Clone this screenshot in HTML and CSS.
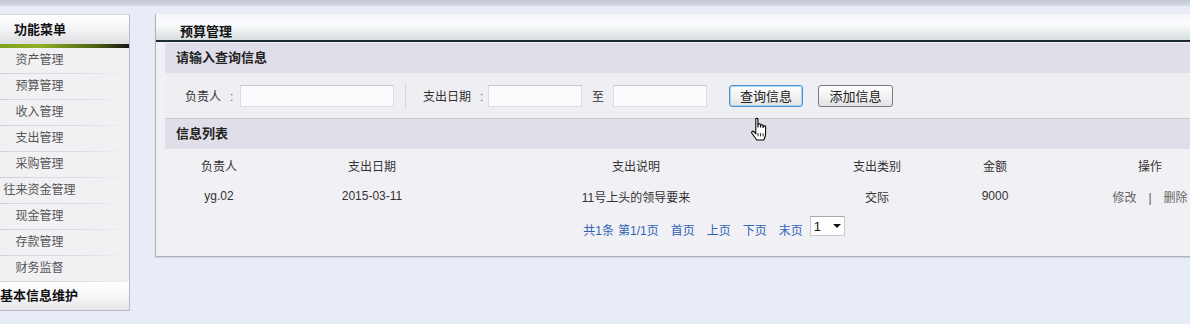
FILE: index.html
```html
<!DOCTYPE html>
<html lang="zh-CN">
<head>
    <meta charset="UTF-8">
    <title>预算管理</title>
    <link rel="stylesheet" href="styles.css">
</head>
<body>

<div class="topbar"></div>

<div class="layout">
    <aside class="sidebar">
        <div class="side-title">功能菜单</div>
        <div class="side-line"></div>
        <ul class="menu">
            <li><a href="#">资产管理</a></li>
            <li><a href="#">预算管理</a></li>
            <li><a href="#">收入管理</a></li>
            <li><a href="#">支出管理</a></li>
            <li><a href="#">采购管理</a></li>
            <li><a href="#">往来资金管理</a></li>
            <li><a href="#">现金管理</a></li>
            <li><a href="#">存款管理</a></li>
            <li><a href="#">财务监督</a></li>
        </ul>
        <div class="side-group">基本信息维护</div>
    </aside>

    <main class="panel">
        <div class="panel-title">预算管理</div>
        <div class="panel-body">
            <div class="band">请输入查询信息</div>
            <form class="search">
                <label class="lbl lbl-name">负责人<span class="colon">:</span></label>
                <input class="field field-name" type="text">
                <span class="divider"></span>
                <label class="lbl lbl-date">支出日期<span class="colon">:</span></label>
                <input class="field field-date" type="text">
                <span class="to">至</span>
                <input class="field field-date" type="text">
                <button type="button" class="btn btn-focus">查询信息</button>
                <button type="button" class="btn btn-add">添加信息</button>
            </form>

            <div class="band">信息列表</div>
            <table class="list">
                <colgroup>
                    <col style="width: 108px">
                    <col style="width: 198px">
                    <col style="width: 330px">
                    <col style="width: 152px">
                    <col style="width: 84px">
                    <col style="width: 226px">
                </colgroup>
                <thead>
                    <tr>
                        <th>负责人</th>
                        <th>支出日期</th>
                        <th>支出说明</th>
                        <th>支出类别</th>
                        <th>金额</th>
                        <th>操作</th>
                    </tr>
                </thead>
                <tbody>
                    <tr>
                        <td>yg.02</td>
                        <td>2015-03-11</td>
                        <td>11号上头的领导要来</td>
                        <td>交际</td>
                        <td>9000</td>
                        <td class="ops"><a href="#">修改</a><span class="sep">|</span><a href="#">删除</a></td>
                    </tr>
                </tbody>
            </table>
            <div class="pager">
                <span>共1条</span> <span>第1/1页</span>
                <a href="#">首页</a>
                <a href="#">上页</a>
                <a href="#">下页</a>
                <a href="#">末页</a>
                <span class="page-select">1 <i class="caret"></i></span>
            </div>
        </div>
    </main>
</div>

<svg class="cursor" width="19" height="25" viewBox="0 0 18 23">
    <path d="M5.5 1.8 C5.5 0.6 7.5 0.6 7.5 1.8 L7.5 9.5 L7.7 7 C7.7 5.8 9.9 5.8 9.9 7 L9.9 9.5 L10.2 7.8 C10.2 6.7 12.3 6.7 12.3 7.8 L12.3 10 L12.6 8.8 C12.6 7.8 14.8 7.8 14.8 8.8 L14.8 15.5 C14.8 18 13.6 20.3 13 21.5 L6.4 21.5 L1.8 15 C1 13.8 2.6 12.4 3.7 13.5 L5.5 15.5 Z" fill="#fff" stroke="#000" stroke-width="1"/>
    <path d="M7.6 15 V18 M10 15 V18 M12.4 15 V18" stroke="#000" stroke-width="0.8"/>
</svg>

</body>
</html>
```

FILE: styles.css
```css
body {
    margin: 0;
    background-color: #e8ecf7;
    font-family: "Liberation Sans", "Noto Sans CJK SC", sans-serif;
    font-size: 12px;
    color: #333;
    overflow: hidden;
    position: relative;
}
a {
    text-decoration: none;
}
.topbar {
    height: 6px;
    background: linear-gradient(#c3c7d4, #d6dae6);
}
.layout {
    display: flex;
    align-items: flex-start;
    padding-top: 8px;
    gap: 25px;
}

/* menu a la izquierda */
.sidebar {
    width: 129px;
    flex: none;
    background-color: #f1f0f3;
    border-right: 1px solid #b7bbc7;
    border-bottom: 1px solid #b7bbc7;
}
.side-title {
    height: 29px;
    line-height: 29px;
    padding-left: 14px;
    font-size: 13px;
    font-weight: bold;
    color: #111;
    border-top: 1px solid #d6d9e2;
    background: linear-gradient(#ffffff, #f4f4f6 50%, #dedee2);
}
.side-line {
    height: 4px;
    background: linear-gradient(to right, #7fa21c, #8eb226 30%, #4d5f14 75%, #151515);
}
.menu {
    list-style: none;
    margin: 0;
    padding: 0;
}
.menu li {
    height: 25px;
    border-bottom: 1px solid;
    border-image: linear-gradient(to right, #d2d2da, #dcdce2 60%, #f1f0f3) 1;
}
.menu a {
    display: block;
    width: 79px;
    text-align: center;
    line-height: 25px;
    color: #555;
}
.side-group {
    height: 28px;
    line-height: 28px;
    font-size: 13px;
    font-weight: bold;
    color: #111;
    background: linear-gradient(#ffffff, #f6f6f8 55%, #e4e4e8);
}

/* panel principal */
.panel {
    width: 1118px;
    flex: none;
    background-color: #f1f0f4;
    border-left: 1px solid #aeb2be;
    border-bottom: 1px solid #aeb2be;
    box-shadow: 0 1px 1px #d0d4e0;
}
.panel-title {
    height: 22px;
    padding-top: 4px;
    line-height: 28px;
    padding-left: 24px;
    font-size: 13px;
    font-weight: bold;
    color: #111;
    background: linear-gradient(#f6f7fb, #fbfbfd 40%, #d6dede);
    border-bottom: 2px solid #1d2a34;
}
.panel-body {
    padding: 1px 0 9px 9px;
}
.band {
    height: 30px;
    line-height: 30px;
    padding-left: 11px;
    font-size: 13px;
    font-weight: bold;
    color: #222;
    background-color: #e0dfe9;
}
.search {
    display: flex;
    align-items: center;
    height: 45px;
    margin: 0;
    padding-left: 20px;
    background-color: #efeef2;
    border-bottom: 1px solid #c9c9d2;
}
.lbl {
    flex: none;
}
.colon {
    margin-left: 9px;
    color: #666;
}
.lbl-name {
    width: 55px;
}
.lbl-date {
    width: 65px;
    margin-left: 17px;
}
.field {
    height: 20px;
    padding: 0;
    background-color: #fbfbfd;
    border: 1px solid #dcdce2;
    border-top-color: #c6c6ce;
}
.field-name {
    width: 152px;
}
.field-date {
    width: 92px;
}
.divider {
    width: 1px;
    height: 24px;
    margin-left: 11px;
    background-color: #d4d4da;
}
.to {
    margin: 0 9px 0 10px;
}
.btn {
    height: 22px;
    padding: 0;
    font-family: inherit;
    font-size: 13px;
    color: #222;
    background: linear-gradient(#fdfdfd, #f2f2f2 50%, #e2e2e4);
    border: 1px solid #7a7a7e;
    border-radius: 3px;
}
.btn-focus {
    width: 74px;
    margin-left: 22px;
    border-color: #4d93d3;
    box-shadow: inset 0 0 0 1px #a9d3f2;
}
.btn-add {
    width: 75px;
    margin-left: 15px;
}

/* lista */
.list {
    width: 1098px;
    table-layout: fixed;
    border-collapse: collapse;
}
.list th {
    height: 32px;
    font-weight: normal;
    color: #333;
    text-align: center;
    padding: 0;
}
.list td {
    height: 30px;
    text-align: center;
    padding: 0;
    color: #333;
}
.ops a {
    color: #666;
}
.sep {
    margin: 0 12px;
    color: #555;
}
.pager {
    width: 1098px;
    height: 36px;
    display: flex;
    align-items: center;
    justify-content: center;
    color: #2f63b6;
}
.pager span + span {
    margin-left: 4px;
}
.pager a {
    margin-left: 12px;
    color: #2f63b6;
}
.pager .page-select {
    display: inline-flex;
    align-items: center;
    justify-content: space-between;
    width: 27px;
    height: 18px;
    margin-left: 7px;
    padding: 0 3px;
    font-size: 13px;
    color: #111;
    background-color: #fff;
    border: 1px solid #c8c8ce;
    border-top-color: #a8a8b0;
    margin-top: -6px;
}
.caret {
    width: 0;
    height: 0;
    border-left: 4px solid transparent;
    border-right: 4px solid transparent;
    border-top: 4px solid #111;
}

.cursor {
    position: absolute;
    left: 750px;
    top: 117px;
}
```
